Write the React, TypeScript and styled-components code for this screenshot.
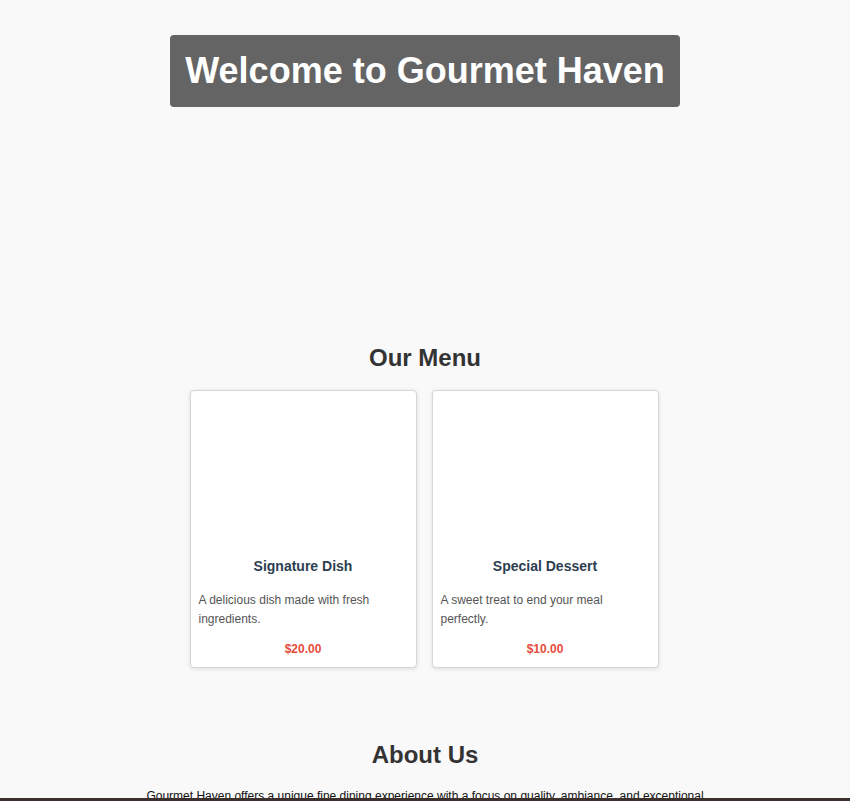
import React from "react";
import styled, { createGlobalStyle } from "styled-components";

const Global = createGlobalStyle`
  html, body { margin: 0; padding: 0; }
  body {
    background: #f9f9f9;
    font-family: "Liberation Sans", Arial, sans-serif;
    color: #333;
  }
`;

const Hero = styled.header`
  height: 320px;
  display: flex;
  justify-content: center;
  align-items: flex-start;
  padding-top: 35px;
  box-sizing: border-box;
`;

const HeroTitle = styled.h1`
  margin: 0;
  background: rgba(0, 0, 0, 0.6);
  color: #fff;
  font-size: 36px;
  font-weight: bold;
  line-height: 72px;
  padding: 0 15px;
  border-radius: 4px;
`;

const Section = styled.section<{ $top: number }>`
  display: flex;
  flex-direction: column;
  align-items: center;
  padding-top: ${(p) => p.$top}px;
`;

const SectionTitle = styled.h2<{ $gap: number }>`
  margin: 0 0 ${(p) => p.$gap}px;
  font-size: 24px;
  line-height: 28px;
  font-weight: bold;
  color: #333;
`;

const Grid = styled.div`
  display: grid;
  grid-template-columns: repeat(2, 227px);
  gap: 15px;
  margin-right: 2px;
`;

const Card = styled.article`
  background: #fff;
  border: 1px solid #d6d6d6;
  border-radius: 4px;
  box-shadow: 0 1px 4px rgba(0, 0, 0, 0.12);
  display: flex;
  flex-direction: column;
  height: 278px;
  box-sizing: border-box;
`;

const ImageArea = styled.div`
  height: 167px;
`;

const CardTitle = styled.h3`
  margin: 0;
  font-size: 14px;
  line-height: 16px;
  font-weight: bold;
  color: #2c3e50;
  text-align: center;
`;

const CardText = styled.p`
  margin: 17px 0 0;
  padding: 0 8px;
  font-size: 12px;
  line-height: 19px;
  color: #555;
`;

const Price = styled.p`
  margin: 13px 0 0;
  font-size: 12px;
  line-height: 14px;
  font-weight: bold;
  color: #e74c3c;
  text-align: center;
`;

const AboutText = styled.p`
  margin: 0;
  max-width: 580px;
  text-align: center;
  font-size: 12px;
  line-height: 16px;
  color: #111;
`;

const BottomBar = styled.div`
  position: fixed;
  left: 0;
  right: 0;
  bottom: 0;
  height: 3px;
  background: #3b302c;
`;

const items = [
  { name: "Signature Dish", desc: "A delicious dish made with fresh ingredients.", price: "$20.00" },
  { name: "Special Dessert", desc: "A sweet treat to end your meal perfectly.", price: "$10.00" },
];

export default function App() {
  return (
    <>
      <Global />
      <Hero>
        <HeroTitle>Welcome to Gourmet Haven</HeroTitle>
      </Hero>
      <Section $top={24}>
        <SectionTitle $gap={18}>Our Menu</SectionTitle>
        <Grid>
          {items.map((it) => (
            <Card key={it.name}>
              <ImageArea />
              <CardTitle>{it.name}</CardTitle>
              <CardText>{it.desc}</CardText>
              <Price>{it.price}</Price>
            </Card>
          ))}
        </Grid>
      </Section>
      <Section $top={73}>
        <SectionTitle $gap={19}>About Us</SectionTitle>
        <AboutText>
          Gourmet Haven offers a unique fine dining experience with a focus on quality, ambiance, and exceptional service.
        </AboutText>
      </Section>
      <BottomBar />
    </>
  );
}
